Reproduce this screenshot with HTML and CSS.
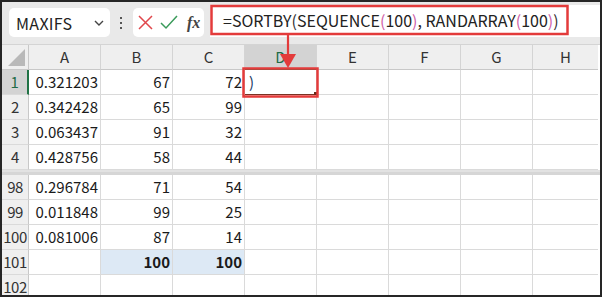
FILE: index.html
```
<!DOCTYPE html>
<html lang="ja">
<head>
<meta charset="utf-8">
<title>SORTBY</title>
<link rel="stylesheet" href="styles.css">
</head>
<body>
<div class="window">

	<!-- 수식 입력줄 -->
	<div class="formula-bar">
		<div class="name-box">
			<span>MAXIFS</span>
			<svg class="chev" width="10" height="6" viewBox="0 0 10 6"><polyline points="1,1 5,5 9,1" fill="none" stroke="#444" stroke-width="1.4"/></svg>
		</div>
		<div class="grip"><i></i><i></i><i></i></div>
		<div class="fx-box">
			<svg width="15" height="15" viewBox="0 0 15 15"><path d="M1 1 L14 14 M14 1 L1 14" stroke="#e0474c" stroke-width="1.5"/></svg>
			<svg width="18" height="15" viewBox="0 0 18 15"><polyline points="1,8 6,13 17,1" fill="none" stroke="#3b9b5b" stroke-width="1.5"/></svg>
			<em>fx</em>
		</div>
		<div class="formula-input">=SORTBY<span class="p1">(</span>SEQUENCE<span class="p2">(</span>100<span class="p2">)</span>, RANDARRAY<span class="p2">(</span>100<span class="p2">)</span><span class="p1">)</span></div>
	</div>

	<!-- 시트 -->
	<div class="sheet">
		<div class="row head">
			<div class="cell rh corner"><b></b></div>
			<div class="cell">A</div>
			<div class="cell">B</div>
			<div class="cell">C</div>
			<div class="cell sel-col">D</div>
			<div class="cell">E</div>
			<div class="cell">F</div>
			<div class="cell">G</div>
			<div class="cell last">H</div>
		</div>
		<div class="row">
			<div class="cell rh sel-row">1</div>
			<div class="cell num">0.321203</div>
			<div class="cell num">67</div>
			<div class="cell num">72</div>
			<div class="cell edit">)</div>
			<div class="cell"></div><div class="cell"></div><div class="cell"></div><div class="cell last"></div>
		</div>
		<div class="row">
			<div class="cell rh">2</div>
			<div class="cell num">0.342428</div>
			<div class="cell num">65</div>
			<div class="cell num">99</div>
			<div class="cell"></div><div class="cell"></div><div class="cell"></div><div class="cell"></div><div class="cell last"></div>
		</div>
		<div class="row">
			<div class="cell rh">3</div>
			<div class="cell num">0.063437</div>
			<div class="cell num">91</div>
			<div class="cell num">32</div>
			<div class="cell"></div><div class="cell"></div><div class="cell"></div><div class="cell"></div><div class="cell last"></div>
		</div>
		<div class="row">
			<div class="cell rh">4</div>
			<div class="cell num">0.428756</div>
			<div class="cell num">58</div>
			<div class="cell num">44</div>
			<div class="cell"></div><div class="cell"></div><div class="cell"></div><div class="cell"></div><div class="cell last"></div>
		</div>

		<div class="split"></div>

		<div class="row">
			<div class="cell rh">98</div>
			<div class="cell num">0.296784</div>
			<div class="cell num">71</div>
			<div class="cell num">54</div>
			<div class="cell"></div><div class="cell"></div><div class="cell"></div><div class="cell"></div><div class="cell last"></div>
		</div>
		<div class="row">
			<div class="cell rh">99</div>
			<div class="cell num">0.011848</div>
			<div class="cell num">99</div>
			<div class="cell num">25</div>
			<div class="cell"></div><div class="cell"></div><div class="cell"></div><div class="cell"></div><div class="cell last"></div>
		</div>
		<div class="row">
			<div class="cell rh">100</div>
			<div class="cell num">0.081006</div>
			<div class="cell num">87</div>
			<div class="cell num">14</div>
			<div class="cell"></div><div class="cell"></div><div class="cell"></div><div class="cell"></div><div class="cell last"></div>
		</div>
		<div class="row">
			<div class="cell rh">101</div>
			<div class="cell"></div>
			<div class="cell num total">100</div>
			<div class="cell num total">100</div>
			<div class="cell"></div><div class="cell"></div><div class="cell"></div><div class="cell"></div><div class="cell last"></div>
		</div>
		<div class="row">
			<div class="cell rh">102</div>
			<div class="cell"></div><div class="cell"></div><div class="cell"></div><div class="cell"></div><div class="cell"></div><div class="cell"></div><div class="cell"></div><div class="cell last"></div>
		</div>
	</div>

	<!-- 설명용 화살표 -->
	<svg class="callout" width="598" height="293" viewBox="0 0 598 293">
		<rect x="209.5" y="4" width="356" height="28" fill="none" stroke="#e33b3b" stroke-width="2.5"/>
		<line x1="286" y1="32" x2="286" y2="54" stroke="#e33b3b" stroke-width="2.2"/>
		<polygon points="278,52 294,52 286,66" fill="#e33b3b"/>
		<line x1="243" y1="92.5" x2="313" y2="92.5" stroke="#7a3324" stroke-width="1"/>
		<rect x="312" y="90" width="3" height="3" fill="#6b2a1c"/>
		<rect x="241.5" y="66.5" width="74" height="28" fill="none" stroke="#e33b3b" stroke-width="2.5"/>
	</svg>
</div>
</body>
</html>
```

FILE: styles.css
```
	/** 공통 **/
	*{margin:0; padding:0; box-sizing:border-box;}
	body{background:#fff;}
	.window{
		position:relative;
		width:602px;
		height:297px;
		overflow:hidden;
		border:2px solid #262626;
		background:#fff;
		font-family:"Noto Sans CJK JP", "Liberation Sans", sans-serif;
		color:#1a1a1a;
	}

	/* 수식 입력줄 */
	.formula-bar{
		display:flex;
		align-items:flex-start;
		height:43px;
		padding:5px 0 0 7px;
		background:#e9e9e9;
		border-bottom:1px solid #d4d4d4;
	}
	.name-box{
		display:flex;
		align-items:center;
		justify-content:space-between;
		width:101px;
		height:29px;
		margin-top:1px;
		padding:0 6px 0 7px;
		background:#fff;
		border-radius:5px;
		font-size:16px;
		letter-spacing:0.3px;
		color:#222;
	}
	.grip{
		display:flex;
		flex-direction:column;
		gap:3px;
		width:2px;
		margin:10px 11px 0 10px;
	}
	.grip i{display:block; width:2px; height:2px; background:#555;}
	.fx-box{
		display:flex;
		align-items:center;
		gap:7px;
		width:71px;
		height:29px;
		margin-top:1px;
		padding:0 0 0 5px;
		background:#fff;
		border-radius:5px;
	}
	.fx-box em{
		font-family:"Liberation Serif", serif;
		font-size:16px;
		font-weight:bold;
		color:#444;
		margin-left:2px;
	}
	.formula-input{
		flex:1;
		height:32px;
		margin:-2px 0 0 6px;
		padding:3px 0 0 13px;
		background:#fff;
		font-size:16px;
		letter-spacing:0;
		color:#222;
		white-space:nowrap;
	}
	.formula-input .p1{color:#333;}
	.formula-input .p2{color:#d05fa8;}

	/* 시트 */
	.row{display:flex; height:25px;}
	.cell{
		flex:none;
		width:72px;
		height:25px;
		border-right:1px solid #dadada;
		border-bottom:1px solid #dadada;
		font-size:15px;
		line-height:24px;
		white-space:nowrap;
		overflow:hidden;
	}
	.cell.last{width:65px; border-right:none;}
	.cell.num{text-align:right; padding-right:2px;}
	.cell.total{font-weight:bold; background:#dde9f5;}
	.cell.edit{padding-left:4px; color:#203864;}

	.head .cell{
		background:#efefef;
		text-align:center;
		color:#333;
		border-right-color:#d4d4d4;
		border-bottom-color:#c8c8c8;
	}
	.head .sel-col{background:#d3d3d3; color:#1e6b47; border-bottom:2px solid #217346;}
	.rh{
		width:27px;
		background:#efefef;
		text-align:center;
		color:#333;
		border-right-color:#c8c8c8 !important;
		letter-spacing:-0.5px;
	}
	.rh.sel-row{background:#d3d3d3; color:#1e6b47; border-right:2px solid #217346 !important;}
	.corner{position:relative;}
	.corner b{
		position:absolute;
		right:3px; bottom:3px;
		width:0; height:0;
		border-left:17px solid transparent;
		border-bottom:17px solid #b9b9b9;
	}
	.split{height:5px; background:#d6d6d6; border-top:2px solid #e2e2e2;}

	.callout{position:absolute; left:0; top:0; pointer-events:none;}
```
